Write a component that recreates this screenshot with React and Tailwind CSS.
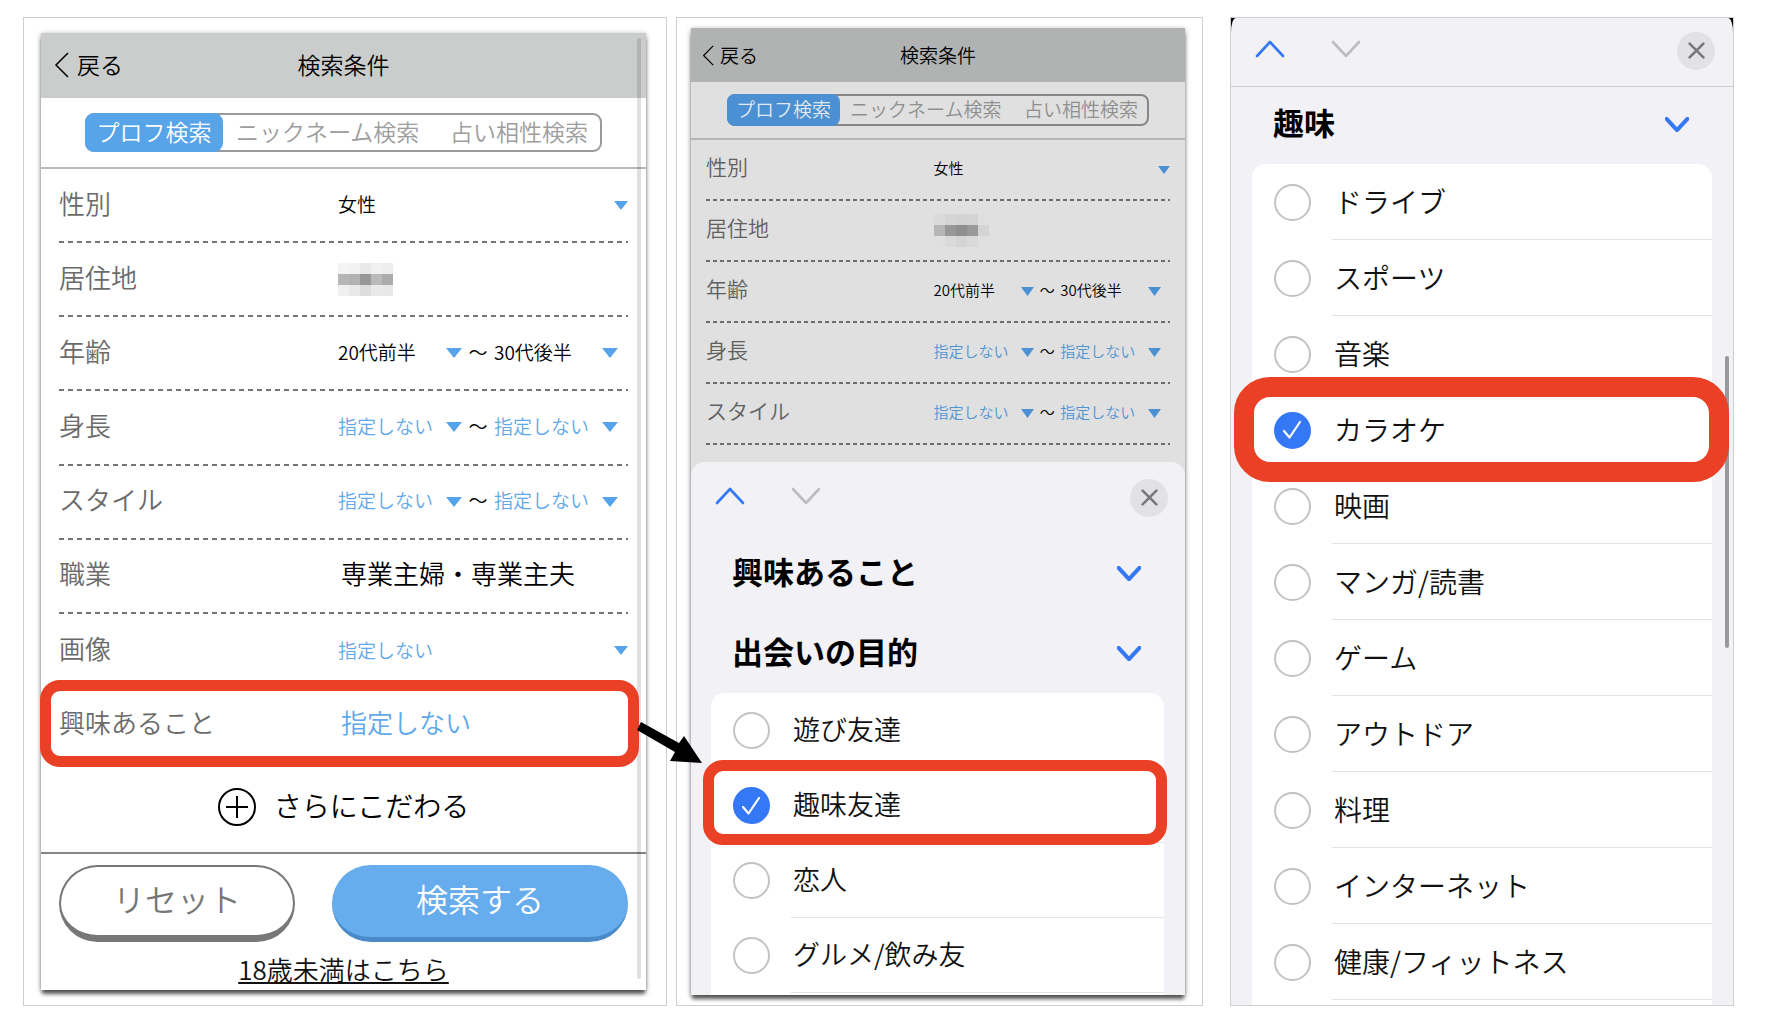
import React from "react";

const UNSET = "指定しない";

const ROWS = [
  { label: "性別", kind: "single", value: "女性" },
  { label: "居住地", kind: "masked" },
  { label: "年齢", kind: "range", from: "20代前半", to: "30代後半" },
  { label: "身長", kind: "range", from: UNSET, to: UNSET },
  { label: "スタイル", kind: "range", from: UNSET, to: UNSET },
  { label: "職業", kind: "text", value: "専業主婦・専業主夫" },
  { label: "画像", kind: "single", value: UNSET },
  { label: "興味あること", kind: "text", value: UNSET, marked: true },
];

const PURPOSES = ["遊び友達", "趣味友達", "恋人", "グルメ/飲み友"];

const HOBBIES = [
  "ドライブ",
  "スポーツ",
  "音楽",
  "カラオケ",
  "映画",
  "マンガ/読書",
  "ゲーム",
  "アウトドア",
  "料理",
  "インターネット",
  "健康/フィットネス",
];

const MASK_LIGHT = [
  "bg-[#f4f4f4]", "bg-[#f2f2f2]", "bg-[#e9e9e9]", "bg-[#f1f1f1]", "bg-[#eeeeee]",
  "bg-[#b6b6b6]", "bg-[#b2b2b2]", "bg-[#989898]", "bg-[#bababa]", "bg-[#acacac]",
  "bg-[#f0f0f0]", "bg-[#e9e9e9]", "bg-[#dddddd]", "bg-[#e9e9e9]", "bg-[#e8e8e8]",
];

const MASK_DIM = [
  "bg-[#dadada]", "bg-[#d5d5d5]", "bg-[#d3d3d3]", "bg-[#d4d4d4]", "bg-[#dfdfdf]",
  "bg-[#b6b6b6]", "bg-[#989898]", "bg-[#8f8f8f]", "bg-[#999999]", "bg-[#d4d4d4]",
  "bg-[#dfdfdf]", "bg-[#dadada]", "bg-[#d4d4d4]", "bg-[#d9d9d9]", "bg-[#e0e0e0]",
];

const LARGE = {
  panel: "bg-white",
  header: "h-[65px] bg-[#cbcdcc] px-[13px] pb-[2px] text-[23px]",
  back: "gap-2",
  backIcon: "h-[26px] w-[15px]",
  tabBar: "h-[71px] border-[#b9b9b9] px-[44px]",
  tabs: "h-[39px] rounded-[9px] border-[#9a9a9a] text-[23px] text-[#9d9d9d]",
  tabOn: "w-[138px] rounded-[9px] bg-[#57a4e8] text-white",
  tabPad: "pr-[12px] pl-[15px]",
  rows: "px-[18px]",
  dash: "bg-[repeating-linear-gradient(90deg,#757575_0_5px,transparent_5px_9px)]",
  label: "text-[26px] text-[#6b6b6b]",
  text: "pb-[6px] pl-[3px] text-[26px]",
  select: "text-[19px]",
  unset: "text-[#5fa9ea]",
  arrow: "text-[#55a3ea]",
  arrowWide: "h-[10px] w-[16px]",
  arrowSmall: "h-[9px] w-[14px]",
  tilde: "w-[32px] text-[19px]",
  range: "pr-[10px]",
  mask: MASK_LIGHT,
};

const SMALL = {
  panel: "bg-[#e0e0e0]",
  header: "h-[54px] bg-[#b1b3b2] px-[11px] text-[19px]",
  back: "gap-[6px]",
  backIcon: "h-[21px] w-[12px]",
  tabBar: "h-[58px] border-[#b4b4b4] px-[36px]",
  tabs: "h-[32px] rounded-[8px] border-[#868686] text-[19px] text-[#8f8f8f]",
  tabOn: "w-[113px] rounded-[8px] bg-[#4a90d2] text-[#e4e8ec]",
  tabPad: "pr-[9px] pl-[12px]",
  rows: "px-[15px]",
  dash: "bg-[repeating-linear-gradient(90deg,#6c6c6c_0_4px,transparent_4px_7px)]",
  label: "text-[21px] text-[#606060]",
  text: "pb-1 pl-[3px] text-[21px]",
  select: "text-[15px]",
  unset: "text-[#4f94d3]",
  arrow: "text-[#4a90d2]",
  arrowWide: "h-[9px] w-[13px]",
  arrowSmall: "h-[8px] w-[12px]",
  tilde: "w-[26px] text-[15px]",
  range: "pr-[9px]",
  mask: MASK_DIM,
};

function Chevron({ up, className, stroke = 3 }) {
  return (
    <svg viewBox="0 0 30 18" fill="none" stroke="currentColor" strokeWidth={stroke} strokeLinecap="round" strokeLinejoin="round" className={className} aria-hidden="true">
      <path d={up ? "M2 16 15 2 28 16" : "M2 2 15 16 28 2"} />
    </svg>
  );
}

function Triangle({ className }) {
  return (
    <svg viewBox="0 0 16 10" preserveAspectRatio="none" className={className} aria-hidden="true">
      <path d="M0 0H16L8 10Z" fill="currentColor" />
    </svg>
  );
}

function Select({ name, value, size, wide }) {
  return (
    <span className="relative flex min-w-0 flex-1 items-center">
      <select aria-label={name} defaultValue={value} className={`w-full appearance-none bg-transparent p-0 pb-[2px] ${size.select} ${value === UNSET ? size.unset : "text-black"}`}>
        <option>{value}</option>
      </select>
      <Triangle className={`pointer-events-none absolute right-0 ${size.arrow} ${wide ? size.arrowWide : size.arrowSmall}`} />
    </span>
  );
}

function RowValue({ row, size }) {
  if (row.kind === "single") return <Select name={row.label} value={row.value} size={size} />;
  if (row.kind === "range") {
    return (
      <div className={`flex flex-1 items-center ${size.range}`}>
        <Select name={`${row.label} 下限`} value={row.from} size={size} wide />
        <span className={`shrink-0 pb-[2px] text-center text-black ${size.tilde}`}>〜</span>
        <Select name={`${row.label} 上限`} value={row.to} size={size} wide />
      </div>
    );
  }
  if (row.kind === "masked") {
    return (
      <div className="grid grid-cols-[repeat(5,11px)]">
        {size.mask.map((tone, i) => (
          <span key={i} className={`h-[11px] ${tone}`} />
        ))}
      </div>
    );
  }
  return (
    <button type="button" className={`${size.text} ${row.value === UNSET ? size.unset : "text-black"}`}>
      {row.value}
    </button>
  );
}

function Row({ row, size, last, className }) {
  return (
    <div className={`relative flex flex-col ${className}`}>
      <div className="grid flex-1 grid-cols-[279fr_290fr] items-center">
        <span className={`pb-[6px] ${size.label}`}>{row.label}</span>
        <div className="flex">
          <RowValue row={row} size={size} />
        </div>
      </div>
      {!last && <div className={`h-[2px] ${size.dash}`} />}
      {row.marked && (
        <>
          <div className="pointer-events-none absolute -top-2 -right-[11px] -bottom-[5px] -left-[19px] z-10 rounded-[20px] border-[11px] border-[#e94026]" />
          <svg viewBox="0 0 66 42" className="absolute top-[33px] left-full z-20 ml-[9px] h-[42px] w-[66px]" aria-hidden="true">
            <path d="M4 1 42 22 47 15 65 42 33 40 38 31 0 9Z" fill="black" />
          </svg>
        </>
      )}
    </div>
  );
}

function SearchTop({ size }) {
  return (
    <>
      <header className={`grid shrink-0 grid-cols-3 items-center ${size.header}`}>
        <button type="button" className={`flex items-center ${size.back}`}>
          <svg viewBox="0 0 15 26" fill="none" stroke="currentColor" strokeWidth="1.5" className={size.backIcon} aria-hidden="true">
            <path d="M14 1 2 13 14 25" />
          </svg>
          戻る
        </button>
        <h1 className="text-center">検索条件</h1>
      </header>
      <div className={`flex shrink-0 items-center border-b-2 ${size.tabBar}`}>
        <div role="tablist" className={`relative flex flex-1 items-center justify-between whitespace-nowrap border-2 ${size.tabs}`}>
          <button type="button" role="tab" aria-selected="true" className={`-m-[2px] flex items-center justify-center self-stretch pb-[2px] ${size.tabOn}`}>
            プロフ検索
          </button>
          <div className={`flex flex-1 justify-between pb-[2px] ${size.tabPad}`}>
            <button type="button" role="tab" aria-selected="false">ニックネーム検索</button>
            <button type="button" role="tab" aria-selected="false">占い相性検索</button>
          </div>
        </div>
      </div>
    </>
  );
}

function SheetBar({ className }) {
  return (
    <div className={`flex shrink-0 items-center ${className}`}>
      <button type="button" aria-label="前へ" className="pb-1 text-[#3478f6]">
        <Chevron up className="h-[18px] w-[30px]" stroke={2.6} />
      </button>
      <button type="button" aria-label="次へ" className="ml-[46px] pb-1 text-[#bdbdc1]">
        <Chevron className="h-[18px] w-[30px]" stroke={2.6} />
      </button>
      <button type="button" aria-label="閉じる" className="ml-auto flex size-[38px] items-center justify-center rounded-full bg-[#e2e2e6] text-[#78787c]">
        <svg viewBox="0 0 16 16" fill="none" stroke="currentColor" strokeWidth="2.4" strokeLinecap="round" className="size-[17px]" aria-hidden="true">
          <path d="M1.500 1.500 14.500 14.500M14.500 1.500 1.500 14.500" />
        </svg>
      </button>
    </div>
  );
}

function GroupHeading({ children, className }) {
  return (
    <button type="button" className={`flex shrink-0 items-center justify-between text-left text-[31px] font-bold text-black ${className}`}>
      <span className="pb-1">{children}</span>
      <Chevron className="h-[15px] w-[24px] text-[#3478f6]" stroke={5} />
    </button>
  );
}

function Options({ items, checked, rowClass, ringClass, className }) {
  return (
    <ul className={`shrink-0 rounded-t-[14px] bg-white ${className}`}>
      {items.map((item) => (
        <li key={item} className="relative">
          <label className={`flex ${rowClass}`}>
            <span className="relative flex w-[80px] shrink-0 items-center justify-center">
              <input type="checkbox" defaultChecked={item === checked} className="peer size-[37px] appearance-none rounded-full border-2 border-[#c3c3c5] bg-white checked:border-[#3478f6] checked:bg-[#3478f6]" />
              <svg viewBox="0 0 20 20" fill="none" stroke="white" strokeWidth="2.200" strokeLinecap="round" strokeLinejoin="round" className="pointer-events-none absolute hidden size-[20px] peer-checked:block" aria-hidden="true">
                <path d="M2 11 7.500 17.500 18 2" />
              </svg>
            </span>
            <span className="flex flex-1 items-center border-b border-[#e4e4e6] pb-[2px] pl-[2px] text-[#111]">{item}</span>
          </label>
          {item === checked && <div className={`pointer-events-none absolute z-10 border-[#e94026] ${ringClass}`} />}
        </li>
      ))}
    </ul>
  );
}

const FRAME = "flex min-h-0 min-w-0 flex-col border border-[#cfcfcf]";
const SHADOW = "shadow-[0_5px_4px_-1px_rgba(0,0,0,0.6),0_1px_5px_rgba(0,0,0,0.35)]";

export default function App() {
  return (
    <main lang="ja" className="grid h-screen grid-cols-[644fr_527fr_522fr] grid-rows-1 gap-[9px] bg-white pt-[17px] pr-[38px] pb-[18px] pl-[23px] font-['Noto_Sans_CJK_JP',sans-serif] font-[350] text-black">
      <section className={`${FRAME} bg-white pt-[15px] pr-[20px] pb-[15px] pl-[17px]`}>
        <div className={`relative flex flex-1 flex-col ${LARGE.panel} ${SHADOW}`}>
          <SearchTop size={LARGE} />
          <div className="absolute top-[5px] right-[5px] bottom-[11px] w-1 rounded-full bg-black/12" />
          <div className={`flex flex-1 flex-col ${LARGE.rows}`}>
            {ROWS.map((row, i) => (
              <Row key={row.label} row={row} size={LARGE} last={i >= 6} className="flex-1" />
            ))}
          </div>
          <button type="button" className="flex h-[90px] shrink-0 items-center justify-center gap-[18px] text-[28px]">
            <svg viewBox="0 0 38 38" fill="none" stroke="currentColor" strokeWidth="2" className="size-[38px]" aria-hidden="true">
              <circle cx="19" cy="19" r="18" />
              <path d="M19 8V30M8 19H30" />
            </svg>
            <span className="pb-1">さらにこだわる</span>
          </button>
          <footer className="flex h-[138px] shrink-0 flex-col items-center border-t-2 border-[#858585] px-[18px] pt-[11px]">
            <div className="grid w-full grid-cols-[236fr_296fr] gap-[37px] text-[32px]">
              <button type="button" className="flex h-[77px] items-center justify-center rounded-full border-2 border-b-[7px] border-[#777] bg-white pb-[6px] text-[#777]">
                リセット
              </button>
              <button type="button" className="flex h-[77px] items-center justify-center rounded-full border-b-[5px] border-[#4a8ac8] bg-[#67adee] pb-[6px] text-white">
                検索する
              </button>
            </div>
            <a href="#under18" className="mt-[9px] text-[26px] leading-[36px] text-[#111] underline decoration-2 underline-offset-2">
              18歳未満はこちら
            </a>
          </footer>
        </div>
      </section>

      <section className={`${FRAME} bg-white pt-[10px] pr-[17px] pb-[10px] pl-[14px]`}>
        <div className={`flex min-h-0 flex-1 flex-col ${SMALL.panel} ${SHADOW}`}>
          <SearchTop size={SMALL} />
          <div className={`shrink-0 ${SMALL.rows}`}>
            {ROWS.slice(0, 5).map((row) => (
              <Row key={row.label} row={row} size={SMALL} className="h-[61px]" />
            ))}
          </div>
          <div className="mt-[17px] flex min-h-0 flex-1 flex-col overflow-hidden rounded-t-[14px] bg-[#f1f1f6]">
            <SheetBar className="h-[71px] pr-[17px] pl-[24px]" />
            <GroupHeading className="h-[80px] pr-[44px] pl-[41px]">興味あること</GroupHeading>
            <GroupHeading className="h-[80px] pr-[44px] pl-[41px]">出会いの目的</GroupHeading>
            <Options items={PURPOSES} checked="趣味友達" className="mr-[21px] ml-[20px] text-[27px]" rowClass="h-[75px]" ringClass="-top-2 -right-[3px] -bottom-[2px] -left-2 rounded-[20px] border-[11px]" />
            <div className="mr-[21px] ml-[20px] flex-1 bg-white" />
          </div>
        </div>
      </section>

      <section className={`${FRAME} ml-[18px] bg-black`}>
        <div className="relative flex min-h-0 flex-1 flex-col overflow-hidden rounded-[5px_5px_0_0/14px_14px_0_0] bg-[#f1f1f6]">
          <div className="absolute top-[338px] right-[4px] h-[292px] w-1 rounded-full bg-[#98989d]" />
          <SheetBar className="h-[69px] border-b border-[#cfcfd3] pr-[18px] pb-[3px] pl-[24px]" />
          <GroupHeading className="h-[77px] pr-[44px] pb-[2px] pl-[42px]">趣味</GroupHeading>
          <Options items={HOBBIES} checked="カラオケ" className="mr-[21px] ml-[21px] text-[28px]" rowClass="h-[76px]" ringClass="-top-[15px] -right-[17px] -bottom-[14px] -left-[18px] rounded-[36px] border-[20px]" />
          <div className="mx-[21px] flex-1 bg-white" />
        </div>
      </section>
    </main>
  );
}
